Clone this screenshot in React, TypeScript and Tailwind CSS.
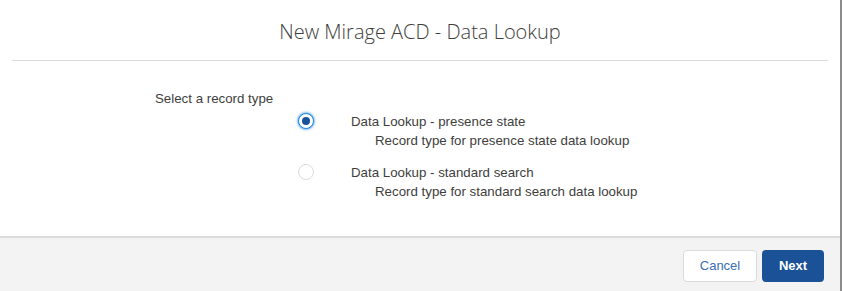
const font = { fontFamily: '"Liberation Sans", Arial, sans-serif' };

type Option = { id: string; label: string; description: string };

const options: Option[] = [
  { id: 'presence', label: 'Data Lookup - presence state', description: 'Record type for presence state data lookup' },
  { id: 'standard', label: 'Data Lookup - standard search', description: 'Record type for standard search data lookup' },
];

function Radio({ checked }: { checked: boolean }) {
  return checked ? (
    <span className="flex h-4 w-4 shrink-0 items-center justify-center rounded-full border border-[#1589ee] bg-white shadow-[0_0_3px_#0070d2]">
      <span className="block h-2 w-2 rounded-full bg-[#1b5297]" />
    </span>
  ) : (
    <span className="block h-4 w-4 shrink-0 rounded-full border border-[#dddbda] bg-white" />
  );
}

export default function App() {
  const selected = 'presence';

  return (
    <div className="flex h-[291px] w-[842px] bg-white text-[13.3px] text-[#3e3e3c] [font-family:'Liberation_Sans',Arial,sans-serif]">
      <div className="flex flex-1 flex-col">
        <header className="flex h-[60px] items-center justify-center pt-1">
          <h2 className="text-[20px] font-light text-[#3e3e3c] [font-family:'Open_Sans',sans-serif]">
            New Mirage ACD - Data Lookup
          </h2>
        </header>
        <div className="mx-3 h-px bg-[#dddbda]" />

        <div className="flex-1 pl-[155px] pt-[30px]">
          <div className="leading-4">Select a record type</div>
          <div className="mt-[5px] flex flex-col gap-[13px] pl-[143px]">
            {options.map(o => (
              <label key={o.id} className="flex items-start">
                <span className="pt-[1px]">
                  <Radio checked={o.id === selected} />
                </span>
                <span className="ml-[37px] flex flex-col leading-[19px]">
                  <span>{o.label}</span>
                  <span className="pl-6">{o.description}</span>
                </span>
              </label>
            ))}
          </div>
        </div>

        <footer className="flex h-[55px] items-start justify-end gap-[5px] border-t-2 border-[#dddbda] bg-[#f3f3f3] pr-4 pt-3" style={font}>
          <button className="h-8 w-[74px] rounded border border-[#dddbda] bg-white text-[13px] text-[#3a70b3]">
            Cancel
          </button>
          <button className="h-8 w-[62px] rounded bg-[#1b5297] text-[13px] font-bold text-white">
            Next
          </button>
        </footer>
      </div>
      <div className="w-[2px] bg-[#8c8c8c]" />
    </div>
  );
}
